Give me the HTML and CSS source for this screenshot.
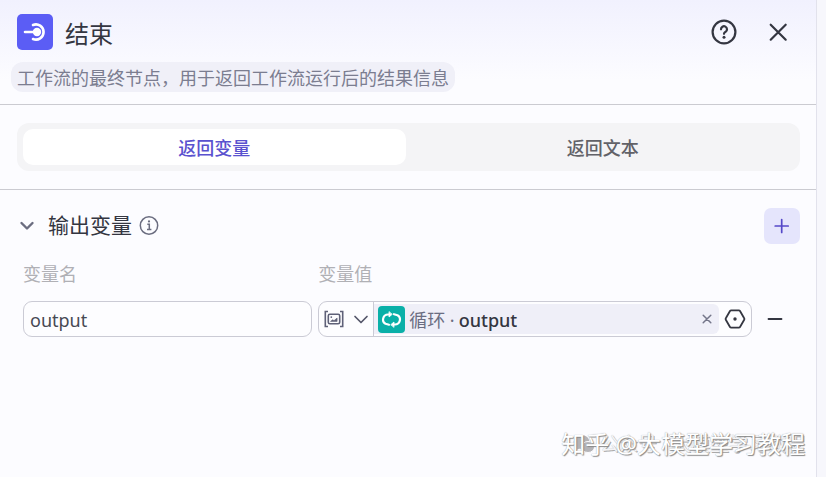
FILE: index.html
```
<!DOCTYPE html>
<html lang="zh-CN">
<head>
    <meta charset="UTF-8">
    <title>结束</title>
    <link rel="stylesheet" href="styles.css">
</head>
<body>
    <main class="panel">
        <header class="panel-header">
            <div class="title-row">
                <svg class="node-icon" viewBox="0 0 36 36">
                    <rect width="36" height="36" rx="5" fill="#5b5df5"/>
                    <circle cx="20" cy="18" r="4.2" fill="#fff"/>
                    <path d="M8 18h10M16 11a7.6 7.600 0 1 1 0 14" fill="none" stroke="#fff" stroke-width="2.6" stroke-linecap="round"/>
                </svg>
                <h1>结束</h1>
                <button class="icon-button" aria-label="帮助">
                    <svg width="26" height="26" viewBox="0 0 26 26" fill="none" stroke="#343641" stroke-width="2.200" stroke-linecap="round">
                        <circle cx="13" cy="13" r="11.400"/>
                        <path d="M10 10.300a3 3 0 1 1 4.600 2.500c-1 .6-1.600 1-1.600 2"/>
                        <circle cx="13" cy="18.200" r="1.500" fill="#343641" stroke="none"/>
                    </svg>
                </button>
                <button class="icon-button" aria-label="关闭">
                    <svg width="26" height="26" viewBox="0 0 26 26" fill="none" stroke="#343641" stroke-width="2.200" stroke-linecap="round">
                        <path d="M5.700 5.700l15 15M20.700 5.700l-15 15"/>
                    </svg>
                </button>
            </div>
            <p class="description">工作流的最终节点，用于返回工作流运行后的结果信息</p>
        </header>

        <div class="tabs-wrap">
            <div class="tabs" role="tablist">
                <button class="tab active" role="tab" aria-selected="true">返回变量</button>
                <button class="tab" role="tab" aria-selected="false">返回文本</button>
            </div>
        </div>

        <section class="outputs">
            <div class="section-head">
                <button class="toggle" aria-label="折叠">
                    <svg width="20" height="20" viewBox="0 0 20 20" fill="none" stroke="#6b6d80" stroke-width="2.4" stroke-linecap="round" stroke-linejoin="round">
                        <path d="M4.500 7l5.500 5.500 5.500-5.500"/>
                    </svg>
                </button>
                <h2>输出变量</h2>
                <svg class="info" width="20" height="20" viewBox="0 0 20 20" fill="none" stroke="#6b6d80" stroke-width="1.500">
                    <circle cx="10" cy="9.500" r="8.700"/>
                    <path d="M8.300 8.300h2v5M8 13.500h4.400"/>
                    <circle cx="10" cy="5.400" r="1.100" fill="#6b6d80" stroke="none"/>
                </svg>
                <button class="add" aria-label="添加">
                    <svg width="18" height="18" viewBox="0 0 18 18" fill="none" stroke="#5548c8" stroke-width="1.700" stroke-linecap="round">
                        <path d="M8.700 2.500v13M2.200 9h13"/>
                    </svg>
                </button>
            </div>

            <div class="fields">
                <label for="name">变量名</label>
                <label for="value">变量值</label>
                <span></span>

                <input id="name" class="name" type="text" value="output">
                <div class="value">
                    <button class="type" aria-label="类型">
                        <svg width="20" height="18" viewBox="0 0 20 18" fill="none" stroke="#5f6178" stroke-width="1.600">
                            <path d="M4 1.500H1.300v15H4M16 1.500h2.700v15H16"/>
                            <rect x="4.300" y="4.300" width="11.400" height="9.400" rx="1.500"/>
                            <path d="M6.500 11.400l2-1.600 1.600.8 3-2.600v3.400z" fill="#5f6178" stroke-width=".6"/>
                            <circle cx="7.300" cy="7.100" r=".9" fill="#5f6178" stroke="none"/>
                        </svg>
                        <svg width="16" height="16" viewBox="0 0 16 16" fill="none" stroke="#55576a" stroke-width="1.700" stroke-linecap="round" stroke-linejoin="round">
                            <path d="M2 5.500l6 6 6-6"/>
                        </svg>
                    </button>
                    <div class="tag">
                        <svg width="27" height="27" viewBox="0 0 27 27" fill="none" stroke="#fff" stroke-width="2.200" stroke-linecap="round" stroke-linejoin="round">
                            <rect width="27" height="27" rx="4" fill="#0ab0a8" stroke="none"/>
                            <path d="M11.500 8.500H10a5 5 0 0 0-2.500 9.300l3.500 1"/>
                            <path d="M15.500 18.500H17a5 5 0 0 0 2.500-9.300l-3.500-1"/>
                            <path d="M11 6v5l3-2.500zM16 21v-5l-3 2.500z" fill="#fff" stroke-width=".8"/>
                        </svg>
                        <span class="source">循环 ·</span>
                        <output id="value" class="field">output</output>
                        <button class="clear" aria-label="清除">
                            <svg width="12" height="12" viewBox="0 0 12 12" fill="none" stroke="#74768a" stroke-width="1.500" stroke-linecap="round">
                                <path d="M2.200 2.200l7.600 7.600M9.800 2.200l-7.600 7.600"/>
                            </svg>
                        </button>
                    </div>
                    <button class="settings" aria-label="设置">
                        <svg width="22" height="22" viewBox="0 0 22 22" fill="none" stroke="#343641" stroke-width="1.800" stroke-linejoin="round">
                            <path d="M7.200 2.300h7.600q.8 0 1.200.7l4.200 7.200q.5.800 0 1.600l-4.200 7.200q-.4.700-1.200.7H7.200q-.8 0-1.200-.7l-4.200-7.200q-.5-.8 0-1.600L6 3q.4-.7 1.200-.7z"/>
                            <circle cx="11" cy="11" r="1.700" fill="#343641" stroke="none"/>
                        </svg>
                    </button>
                </div>
                <button class="remove" aria-label="删除">
                    <svg width="16" height="16" viewBox="0 0 16 16" stroke="#343641" stroke-width="1.800" stroke-linecap="round">
                        <path d="M1.500 8h13"/>
                    </svg>
                </button>
            </div>
        </section>

        <div class="watermark account">
            <svg width="22" height="20" viewBox="0 0 22 20" fill="#b4b4b8">
                <ellipse cx="8.500" cy="8" rx="8" ry="7"/>
                <path d="M3 12l-1 5 5-3z"/>
                <ellipse cx="15" cy="13" rx="6.500" ry="5.500" stroke="#fcfcff"/>
            </svg>
            <span>公众号 · 大模型学习教程</span>
        </div>
        <div class="watermark">知乎 @大模型学习教程</div>
    </main>
</body>
</html>
```
FILE: styles.css
```
* {
    box-sizing: border-box;
}

body {
    margin: 0;
    min-height: 100vh;
    display: flex;
    padding-right: 9px;
    background-color: #f7f7fc;
    font-family: "Noto Sans", "Noto Sans CJK SC", sans-serif;
    font-size: 18px;
    line-height: 24px;
    color: #343641;
}

h1, h2, p {
    margin: 0;
    font-weight: 400;
}

button {
    display: flex;
    align-items: center;
    justify-content: center;
    padding: 0;
    border: none;
    background: none;
    font: inherit;
    color: inherit;
    cursor: pointer;
}

svg {
    display: block;
    flex: none;
}

.panel {
    position: relative;
    flex: 1;
    border-right: 1px solid #e2e2ec;
    background: linear-gradient(#f1f1fe, #fcfcff 80px);
}

.panel-header {
    padding: 14px 16px 12px 11px;
    border-bottom: 1px solid #cbcbd1;
}

.title-row {
    display: flex;
    align-items: center;
    padding-left: 6px;
}

.node-icon {
    width: 36px;
    height: 36px;
}

h1 {
    flex: 1;
    margin-left: 12px;
    padding-top: 4px;
    font-size: 24px;
    line-height: 32px;
}

.icon-button {
    width: 36px;
    height: 36px;
    margin-left: 18px;
}

.icon-button:last-child {
    margin-right: 4px;
}

.description {
    width: fit-content;
    margin-top: 12px;
    padding: 4px 6px 2px;
    border-radius: 12px;
    background-color: #f0f0f8;
    color: #7b7d90;
}

.tabs-wrap {
    padding: 18px 16px 18px 17px;
    border-bottom: 1px solid #cbcbd1;
}

.tabs {
    display: flex;
    gap: 6px;
    padding: 6px;
    border-radius: 12px;
    background-color: #f4f4f6;
}

.tab {
    flex: 1;
    height: 36px;
    padding-top: 2px;
    border-radius: 10px;
    font-weight: 500;
    color: #626268;
}

.tab.active {
    background-color: #fff;
    color: #5a52cf;
}

.outputs {
    padding: 18px 16px 18px 17px;
}

.section-head {
    display: flex;
    align-items: center;
}

h2 {
    margin: 0 7px 0 11px;
    padding-bottom: 2px;
    font-size: 21px;
    line-height: 30px;
}

.add {
    width: 36px;
    height: 36px;
    margin-left: auto;
    border-radius: 7px;
    background-color: #e5e5fc;
}

.fields {
    display: grid;
    grid-template-columns: 2fr 3fr 34px;
    column-gap: 6px;
    row-gap: 15px;
    padding: 18px 8px 0 6px;
}

label {
    color: #b0b0b5;
}

.name, .value {
    width: 100%;
    height: 36px;
    border: 1px solid #cbcbd5;
    border-radius: 9px;
    background-color: #fdfdff;
}

.name {
    padding: 2px 6px 0;
    font: inherit;
    color: #484a54;
}

.value {
    display: flex;
    align-items: center;
}

.type {
    width: 55px;
    height: 34px;
    gap: 9px;
    border-right: 1px solid #cbcbd5;
}

.tag {
    flex: 1;
    display: flex;
    align-items: center;
    height: 30px;
    padding-left: 4px;
    border-radius: 0 6px 6px 0;
    background-color: #efeff8;
}

.source {
    margin: 0 4px;
    padding-top: 2px;
    color: #6b6d82;
}

.field {
    padding-top: 2px;
    font-weight: 500;
}

.clear {
    width: 24px;
    height: 24px;
    margin-left: auto;
}

.settings {
    width: 32px;
    height: 34px;
}

.remove {
    width: 34px;
    height: 36px;
}

.watermark {
    position: absolute;
    right: 11px;
    bottom: 15px;
    font-size: 24px;
    line-height: 36px;
    color: #fff;
    text-shadow: 1px 1px 1px #888, 0 0 1px #999;
}

.watermark.account {
    display: flex;
    align-items: center;
    gap: 5px;
    font-size: 19px;
    color: #f4f4f6;
    text-shadow: 1px 1px 0 #aaa, 0 0 1px #bbb;
}
```
